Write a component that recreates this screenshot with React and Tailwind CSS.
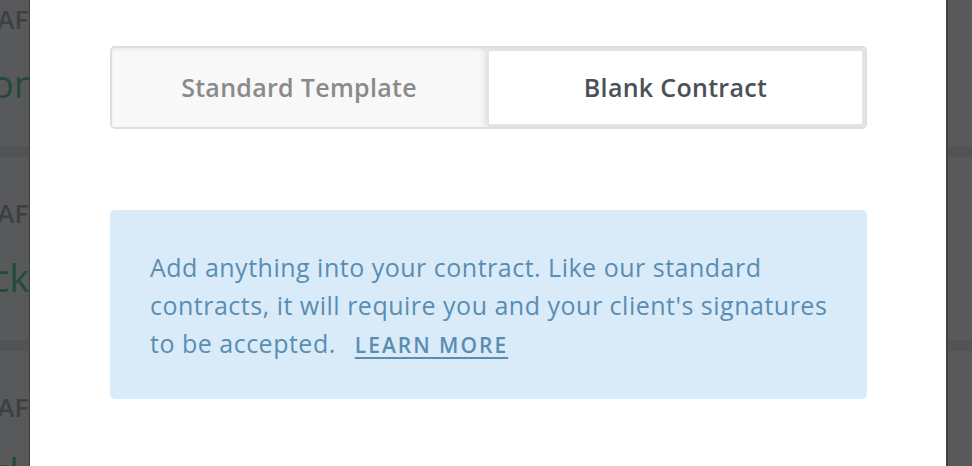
import React from 'react';

function LeftStrip() {
  // dimmed list peeking out behind the modal
  const rows = ['ons', 'ck', 'cl'];
  return (
    <div className="h-full w-[30px] overflow-hidden border-r border-[#3c3d3f] bg-[#58595b]">
      <div className="-mt-[37px] flex flex-col">
        {rows.map((big, i) => (
          <div key={i} className="flex h-[194px] shrink-0 flex-col border-b-[11px] border-[#525355]">
            <div className="flex justify-end -mr-[14px] pt-[43px] text-[26px] leading-[26px] font-semibold text-[#3e3f41] whitespace-nowrap">
              DRAFT
            </div>
            <div className="-ml-[9px] mt-[32px] text-[38px] leading-[38px] text-[#244a3d] whitespace-nowrap">
              {big}
            </div>
          </div>
        ))}
      </div>
    </div>
  );
}

function RightStrip() {
  return (
    <div className="flex h-full w-[26px] flex-col border-l-2 border-[#404143] bg-[#58595b]">
      <div className="h-[146px]" />
      <div className="h-[11px] bg-[#525355]" />
      <div className="h-[183px]" />
      <div className="h-[11px] bg-[#525355]" />
    </div>
  );
}

export default function App() {
  return (
    <div className="flex h-[466px] w-[972px] overflow-hidden font-['Open_Sans',sans-serif]">
      <LeftStrip />

      <div className="flex-1 bg-white pl-[80px] pr-[79px] pt-[46px]">
        {/* Tabs */}
        <div className="flex h-[83px] rounded-[5px] border-2 border-[#dedede] bg-[#f8f8f8] shadow-[inset_0_2px_3px_rgba(0,0,0,0.05)]">
          <button className="flex flex-1 items-center justify-center text-[25px] font-semibold tracking-[0.3px] text-[#8a8a8a] shadow-[inset_-6px_0_6px_-4px_rgba(0,0,0,0.08)]">
            Standard Template
          </button>
          <button className="flex w-[379px] items-center justify-center rounded-[4px] border-[3px] border-[#e4e4e4] bg-white text-[25px] font-semibold tracking-[0.3px] text-[#4b5057]">
            Blank Contract
          </button>
        </div>

        {/* Info */}
        <div className="mt-[81px] h-[189px] rounded-[5px] bg-[#d9ebf8] pl-[40px] pr-[10px] pt-[38px] text-[25px] leading-[38px] tracking-[0.5px] text-[#5a8db2]">
          Add anything into your contract. Like our standard
          <br />
          contracts, it will require you and your client's signatures
          <br />
          to be accepted.{' '}
          <a href="#" className="ml-[12px] text-[21px] font-semibold uppercase tracking-[2px] underline decoration-2 underline-offset-[4px]">
            Learn more
          </a>
        </div>
      </div>

      <RightStrip />
    </div>
  );
}
